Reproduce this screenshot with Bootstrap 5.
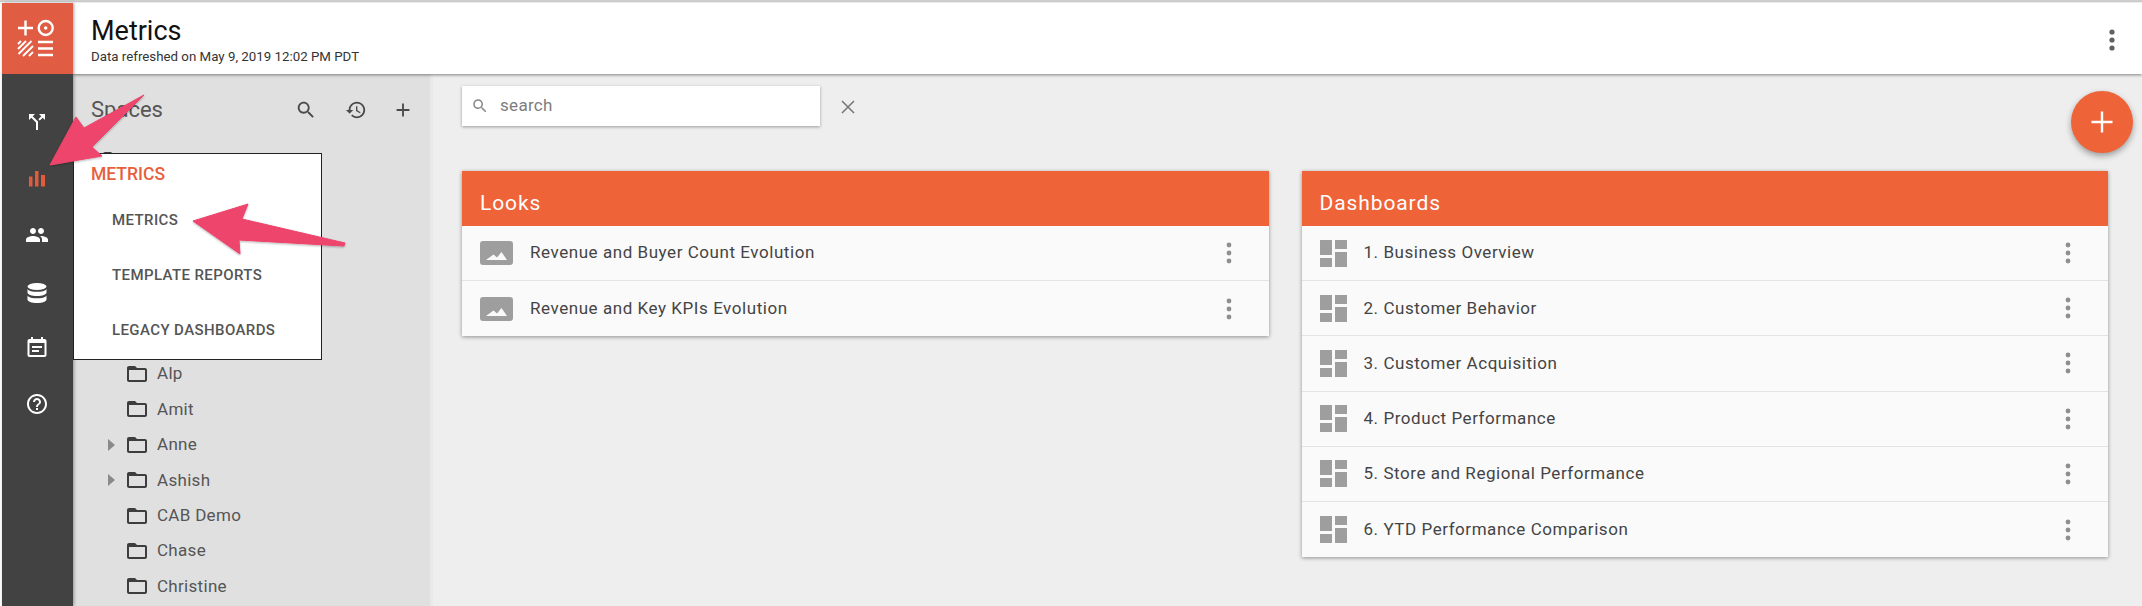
<!DOCTYPE html>
<html lang="en">
<head>
<meta charset="utf-8">
<title>Metrics</title>
<link href="https://cdn.jsdelivr.net/npm/bootstrap@5.3.0/dist/css/bootstrap.min.css" rel="stylesheet">
<style>
html,body{height:606px;overflow:hidden}
body{font-family:Roboto,"Liberation Sans",sans-serif;background:#fff;position:relative;color:#424242;padding:3px 0 0 2px;box-shadow:inset 0 2px 0 #cfcfcf}
.app-shell{height:603px}
.rail{width:71px;background:#424242;box-shadow:1px 0 3px rgba(0,0,0,.35);z-index:3}
.logo-box{height:71px;background:#e05c42}
.logo-box svg{width:71px;height:71px;display:block}
.rail-list{padding-top:20px}
.rail-item{height:56.4px;display:flex;align-items:center;justify-content:center;fill:#fff;padding-right:1px}
.rail-item svg{width:24px;height:24px}
.rail-item.now{fill:#e05c3d}
.rail-item.low svg{margin-top:3px}
.rail-item.high svg{margin-bottom:2px}
.top-head{height:71px;background:#fff;padding:2px 27px 0 18px;box-shadow:0 1px 3px rgba(0,0,0,.45);z-index:2}
.page-name{font-size:27px;line-height:32px;color:#111;margin:0;font-weight:400}
.page-sub{font-size:13.3px;line-height:15px;color:#333;margin-top:2px}
.side{width:357px;background:#e0e0e0;overflow:hidden;flex:none}
.side-head{height:53px;margin-top:9px;padding:0 16px 0 18px}
.side-name{font-size:22px;color:#555}
.side-tools svg{width:22px;height:22px;fill:#4a4a4a;display:block}
.side-tools{gap:25px}
.side-tools svg:first-child{margin-right:3px}
.tree{padding-top:8px}
.tree-row{height:35.4px;display:flex;align-items:center;font-size:17px;letter-spacing:.3px;color:#555;padding-left:35px}
.tree-row .caret-box{width:17px;flex:none;padding-left:0}
.tree-row .caret-box i{display:block;width:0;height:0;border-left:7px solid #8a8a8a;border-top:6px solid transparent;border-bottom:6px solid transparent}
.tree-row svg{width:24px;height:24px;fill:#3d3d3d;flex:none;margin-right:8px}
.gutter{width:3px;background:#e9e9e9;flex:none}
.stage{background:#eee;padding:12px 34px 0 29px;overflow:hidden}
.search-box{width:358px;height:40px;background:#fff;box-shadow:0 1px 3px rgba(0,0,0,.35);padding-left:9px;font-size:17px;color:#7d7d7d;letter-spacing:.3px}
.search-box svg{width:18px;height:18px;fill:#8a8a8a;margin-right:11px}
.clear-x{margin-left:20px;width:16px;height:16px;stroke:#757575;stroke-width:1.5;margin-top:2px}
.panels{margin-top:45px;gap:33px}
.panel{flex:1 1 0;border:0;border-radius:0;box-shadow:0 1px 4px rgba(0,0,0,.4);background:#fafafa}
.panel-top{height:55px;background:#ee6338;color:#fff;font-size:21px;padding:10px 0 0 18px;letter-spacing:.9px}
.panel-row{height:55.2px;display:flex;align-items:center;background:#fafafa;border:0;border-bottom:1px solid #e3e3e3;padding:0 37px 0 18px;font-size:17px;color:#444;border-radius:0;letter-spacing:.55px}
.panel-row:last-child{border-bottom:0}
.kind-icon{width:33px;height:24px;flex:none;margin-right:17px;fill:#9e9e9e}
.kind-dash{width:27px;height:27px;flex:none;margin-right:17px;fill:#9e9e9e}
.dots{width:6px;height:22px;flex:none;fill:#8f8f8f;margin-left:auto}
.head-dots{width:6px;height:22px;fill:#616161}
.fab{position:absolute;left:2071px;top:91px;width:62px;height:62px;border-radius:50%;background:#ee6338;box-shadow:0 3px 6px rgba(0,0,0,.35);display:flex;align-items:center;justify-content:center;z-index:4}
.fab svg{width:36px;height:36px;fill:#fff}
.fly-menu{position:absolute;left:73px;top:153px;width:249px;height:207px;background:#fff;border:1px solid #222;z-index:5;padding-left:17px}
.fly-title{font-size:17.5px;font-weight:500;color:#e85f3e;line-height:20px;margin-top:10px}
.fly-item{font-size:15px;font-weight:500;color:#555;line-height:20px;margin-left:21px;margin-top:35px;letter-spacing:.4px}
.fly-item.first{margin-top:26px}
.arrows{position:absolute;left:0;top:0;width:400px;height:300px;z-index:6;pointer-events:none;overflow:visible}
</style>
</head>
<body>
<div class="app-shell d-flex">
  <nav class="rail d-flex flex-column flex-shrink-0">
    <div class="logo-box">
      <svg viewBox="0 0 71 71" fill="none" stroke="#fff" stroke-width="2.4">
        <path d="M16 25h15M23.500 17.500v15"/>
        <circle cx="43.700" cy="25" r="7"/><circle cx="43.700" cy="25" r="1.800" fill="#fff" stroke="none"/>
        <path d="M16 41l3-3M16 46l8-8M16.500 51l13-13M21 53l10-10M27 53l4-4" stroke-width="1.900"/>
        <path d="M36 39h15M36 45.500h15M36 52h15"/>
      </svg>
    </div>
    <div class="rail-list">
      <div class="rail-item"><svg viewBox="0 0 24 24"><path d="M14 4l2.290 2.290-2.880 2.880 1.420 1.420 2.880-2.880L20 10V4zm-4 0H4v6l2.290-2.290 4.710 4.700V20h2v-8.410l-5.290-5.300z"/></svg></div>
      <div class="rail-item now"><svg viewBox="0 0 24 24"><path d="M4 9.500h3.500v10H4zM10 4h3.500v15.500H10zM16 8h4v11.500h-4z"/></svg></div>
      <div class="rail-item"><svg viewBox="0 0 24 24"><path d="M16 11c1.660 0 2.990-1.340 2.990-3S17.660 5 16 5c-1.660 0-3 1.340-3 3s1.340 3 3 3zm-8 0c1.660 0 2.990-1.340 2.990-3S9.660 5 8 5C6.340 5 5 6.340 5 8s1.340 3 3 3zm0 2c-2.330 0-7 1.170-7 3.500V19h14v-2.500c0-2.330-4.670-3.500-7-3.500zm8 0c-.290 0-.620.020-.970.050 1.160.840 1.970 1.970 1.970 3.450V19h6v-2.500c0-2.330-4.670-3.500-7-3.500z"/></svg></div>
      <div class="rail-item low"><svg viewBox="0 0 24 24"><ellipse cx="12" cy="5.500" rx="9.500" ry="3.500"/><path d="M2.500 8v3.500c0 1.900 4 3.500 9.500 3.500s9.500-1.600 9.500-3.500V8c-1 2-5 2.800-9.500 2.800S3.500 10 2.500 8zM2.500 14.500v4c0 1.900 4 3.500 9.500 3.500s9.500-1.600 9.500-3.500v-4c-1 2-5 2.800-9.500 2.800s-8.500-.8-9.500-2.800z"/></svg></div>
      <div class="rail-item high"><svg viewBox="0 0 24 24"><path d="M19.500 4H18V2h-2v2H8V2H6v2H4.500c-1.100 0-2 .9-2 2v14c0 1.100.9 2 2 2h15c1.100 0 2-.9 2-2V6c0-1.100-.9-2-2-2zm0 16h-15V8h15v12zM7 11h10v2H7zM7 15h7v2H7z"/></svg></div>
      <div class="rail-item"><svg viewBox="0 0 24 24"><path d="M11 18h2v-2h-2v2zm1-16C6.480 2 2 6.480 2 12s4.480 10 10 10 10-4.480 10-10S17.520 2 12 2zm0 18c-4.410 0-8-3.590-8-8s3.590-8 8-8 8 3.590 8 8-3.590 8-8 8zm0-14c-2.210 0-4 1.790-4 4h2c0-1.100.9-2 2-2s2 .9 2 2c0 2-3 1.750-3 5h2c0-2.250 3-2.500 3-5 0-2.210-1.790-4-4-4z"/></svg></div>
    </div>
  </nav>
  <div class="d-flex flex-column flex-grow-1">
    <header class="top-head d-flex align-items-center justify-content-between">
      <div>
        <h1 class="page-name">Metrics</h1>
        <div class="page-sub">Data refreshed on May 9, 2019 12:02 PM PDT</div>
      </div>
      <svg class="head-dots" viewBox="0 0 6 22"><circle cx="3" cy="3" r="2.600"/><circle cx="3" cy="11" r="2.600"/><circle cx="3" cy="19" r="2.600"/></svg>
    </header>
    <div class="d-flex flex-grow-1" style="min-height:0">
      <aside class="side">
        <div class="side-head d-flex align-items-center justify-content-between">
          <span class="side-name">Spaces</span>
          <div class="side-tools d-flex align-items-center">
            <svg viewBox="0 0 24 24"><path d="M15.500 14h-.790l-.280-.270C15.410 12.590 16 11.110 16 9.500 16 5.910 13.090 3 9.500 3S3 5.910 3 9.500 5.910 16 9.500 16c1.610 0 3.090-.590 4.230-1.570l.270.280v.790l5 4.990L20.490 19l-4.990-5zm-6 0C7.010 14 5 11.990 5 9.500S7.010 5 9.500 5 14 7.010 14 9.500 11.990 14 9.500 14z"/></svg>
            <svg viewBox="0 0 24 24"><path d="M13 3c-4.970 0-9 4.030-9 9H1l3.890 3.890.070.140L9 12H6c0-3.870 3.130-7 7-7s7 3.130 7 7-3.130 7-7 7c-1.930 0-3.680-.790-4.940-2.060l-1.420 1.420C8.270 19.990 10.510 21 13 21c4.970 0 9-4.030 9-9s-4.030-9-9-9zm-1 5v5l4.280 2.540.720-1.210-3.500-2.080V8H12z"/></svg>
            <svg viewBox="0 0 24 24"><path d="M19 13h-6v6h-2v-6H5v-2h6V5h2v6h6v2z"/></svg>
          </div>
        </div>
        <div class="tree">
          <div class="tree-row" style="height:212.400px;align-items:flex-start"><svg viewBox="0 0 24 24" style="margin-top:4px;margin-left:-7px"><path d="M20 6h-8l-2-2H4c-1.100 0-1.990.9-1.990 2L2 18c0 1.100.9 2 2 2h16c1.100 0 2-.9 2-2V8c0-1.100-.9-2-2-2zm0 12H4V8h16v10z"/></svg></div>
          <div class="tree-row"><span class="caret-box"></span><svg viewBox="0 0 24 24"><path d="M20 6h-8l-2-2H4c-1.100 0-1.990.9-1.990 2L2 18c0 1.100.9 2 2 2h16c1.100 0 2-.9 2-2V8c0-1.100-.9-2-2-2zm0 12H4V8h16v10z"/></svg>Alp</div>
          <div class="tree-row"><span class="caret-box"></span><svg viewBox="0 0 24 24"><path d="M20 6h-8l-2-2H4c-1.100 0-1.990.9-1.990 2L2 18c0 1.100.9 2 2 2h16c1.100 0 2-.9 2-2V8c0-1.100-.9-2-2-2zm0 12H4V8h16v10z"/></svg>Amit</div>
          <div class="tree-row"><span class="caret-box"><i></i></span><svg viewBox="0 0 24 24"><path d="M20 6h-8l-2-2H4c-1.100 0-1.990.9-1.990 2L2 18c0 1.100.9 2 2 2h16c1.100 0 2-.9 2-2V8c0-1.100-.9-2-2-2zm0 12H4V8h16v10z"/></svg>Anne</div>
          <div class="tree-row"><span class="caret-box"><i></i></span><svg viewBox="0 0 24 24"><path d="M20 6h-8l-2-2H4c-1.100 0-1.990.9-1.990 2L2 18c0 1.100.9 2 2 2h16c1.100 0 2-.9 2-2V8c0-1.100-.9-2-2-2zm0 12H4V8h16v10z"/></svg>Ashish</div>
          <div class="tree-row"><span class="caret-box"></span><svg viewBox="0 0 24 24"><path d="M20 6h-8l-2-2H4c-1.100 0-1.990.9-1.990 2L2 18c0 1.100.9 2 2 2h16c1.100 0 2-.9 2-2V8c0-1.100-.9-2-2-2zm0 12H4V8h16v10z"/></svg>CAB Demo</div>
          <div class="tree-row"><span class="caret-box"></span><svg viewBox="0 0 24 24"><path d="M20 6h-8l-2-2H4c-1.100 0-1.990.9-1.990 2L2 18c0 1.100.9 2 2 2h16c1.100 0 2-.9 2-2V8c0-1.100-.9-2-2-2zm0 12H4V8h16v10z"/></svg>Chase</div>
          <div class="tree-row"><span class="caret-box"></span><svg viewBox="0 0 24 24"><path d="M20 6h-8l-2-2H4c-1.100 0-1.990.9-1.990 2L2 18c0 1.100.9 2 2 2h16c1.100 0 2-.9 2-2V8c0-1.100-.9-2-2-2zm0 12H4V8h16v10z"/></svg>Christine</div>
        </div>
      </aside>
      <div class="gutter"></div>
      <main class="stage flex-grow-1">
        <div class="d-flex align-items-center">
          <div class="search-box d-flex align-items-center">
            <svg viewBox="0 0 24 24"><path d="M15.500 14h-.790l-.280-.270C15.410 12.590 16 11.110 16 9.500 16 5.910 13.090 3 9.500 3S3 5.910 3 9.500 5.910 16 9.500 16c1.610 0 3.090-.590 4.230-1.570l.270.280v.790l5 4.990L20.490 19l-4.990-5zm-6 0C7.010 14 5 11.990 5 9.500S7.010 5 9.500 5 14 7.010 14 9.500 11.990 14 9.500 14z"/></svg>search
          </div>
          <svg class="clear-x" viewBox="0 0 16 16"><path d="M2 2l12 12M14 2L2 14"/></svg>
        </div>
        <div class="panels d-flex align-items-start">
          <section class="card panel">
            <div class="panel-top d-flex align-items-center">Looks</div>
            <div class="list-group list-group-flush">
              <div class="list-group-item panel-row"><svg class="kind-icon" viewBox="0 0 33 24"><path fill-rule="evenodd" d="M3 0h27a3 3 0 0 1 3 3v18a3 3 0 0 1-3 3H3a3 3 0 0 1-3-3V3a3 3 0 0 1 3-3zM6 19h21l-5.500-8-4.500 5.500-3.500-3z"/></svg>Revenue and Buyer Count Evolution<svg class="dots" viewBox="0 0 6 22"><circle cx="3" cy="3" r="2.400"/><circle cx="3" cy="11" r="2.400"/><circle cx="3" cy="19" r="2.400"/></svg></div>
              <div class="list-group-item panel-row"><svg class="kind-icon" viewBox="0 0 33 24"><path fill-rule="evenodd" d="M3 0h27a3 3 0 0 1 3 3v18a3 3 0 0 1-3 3H3a3 3 0 0 1-3-3V3a3 3 0 0 1 3-3zM6 19h21l-5.500-8-4.500 5.500-3.500-3z"/></svg>Revenue and Key KPIs Evolution<svg class="dots" viewBox="0 0 6 22"><circle cx="3" cy="3" r="2.400"/><circle cx="3" cy="11" r="2.400"/><circle cx="3" cy="19" r="2.400"/></svg></div>
            </div>
          </section>
          <section class="card panel">
            <div class="panel-top d-flex align-items-center">Dashboards</div>
            <div class="list-group list-group-flush">
              <div class="list-group-item panel-row"><svg class="kind-dash" viewBox="3 3 18 18"><path d="M3 13h8V3H3v10zm0 8h8v-6H3v6zm10 0h8V11h-8v10zm0-18v6h8V3h-8z"/></svg>1. Business Overview<svg class="dots" viewBox="0 0 6 22"><circle cx="3" cy="3" r="2.400"/><circle cx="3" cy="11" r="2.400"/><circle cx="3" cy="19" r="2.400"/></svg></div>
              <div class="list-group-item panel-row"><svg class="kind-dash" viewBox="3 3 18 18"><path d="M3 13h8V3H3v10zm0 8h8v-6H3v6zm10 0h8V11h-8v10zm0-18v6h8V3h-8z"/></svg>2. Customer Behavior<svg class="dots" viewBox="0 0 6 22"><circle cx="3" cy="3" r="2.400"/><circle cx="3" cy="11" r="2.400"/><circle cx="3" cy="19" r="2.400"/></svg></div>
              <div class="list-group-item panel-row"><svg class="kind-dash" viewBox="3 3 18 18"><path d="M3 13h8V3H3v10zm0 8h8v-6H3v6zm10 0h8V11h-8v10zm0-18v6h8V3h-8z"/></svg>3. Customer Acquisition<svg class="dots" viewBox="0 0 6 22"><circle cx="3" cy="3" r="2.400"/><circle cx="3" cy="11" r="2.400"/><circle cx="3" cy="19" r="2.400"/></svg></div>
              <div class="list-group-item panel-row"><svg class="kind-dash" viewBox="3 3 18 18"><path d="M3 13h8V3H3v10zm0 8h8v-6H3v6zm10 0h8V11h-8v10zm0-18v6h8V3h-8z"/></svg>4. Product Performance<svg class="dots" viewBox="0 0 6 22"><circle cx="3" cy="3" r="2.400"/><circle cx="3" cy="11" r="2.400"/><circle cx="3" cy="19" r="2.400"/></svg></div>
              <div class="list-group-item panel-row"><svg class="kind-dash" viewBox="3 3 18 18"><path d="M3 13h8V3H3v10zm0 8h8v-6H3v6zm10 0h8V11h-8v10zm0-18v6h8V3h-8z"/></svg>5. Store and Regional Performance<svg class="dots" viewBox="0 0 6 22"><circle cx="3" cy="3" r="2.400"/><circle cx="3" cy="11" r="2.400"/><circle cx="3" cy="19" r="2.400"/></svg></div>
              <div class="list-group-item panel-row"><svg class="kind-dash" viewBox="3 3 18 18"><path d="M3 13h8V3H3v10zm0 8h8v-6H3v6zm10 0h8V11h-8v10zm0-18v6h8V3h-8z"/></svg>6. YTD Performance Comparison<svg class="dots" viewBox="0 0 6 22"><circle cx="3" cy="3" r="2.400"/><circle cx="3" cy="11" r="2.400"/><circle cx="3" cy="19" r="2.400"/></svg></div>
            </div>
          </section>
        </div>
      </main>
    </div>
  </div>
</div>
<div class="fab"><svg viewBox="0 0 24 24"><path d="M19 12.800h-6.200V19h-1.600v-6.200H5v-1.600h6.200V5h1.600v6.200H19z"/></svg></div>
<div class="fly-menu">
  <div class="fly-title">METRICS</div>
  <div class="fly-item first">METRICS</div>
  <div class="fly-item">TEMPLATE REPORTS</div>
  <div class="fly-item">LEGACY DASHBOARDS</div>
</div>
<svg class="arrows" viewBox="0 0 400 300">
  <defs><filter id="arrowshade" x="-20%" y="-20%" width="140%" height="140%"><feDropShadow dx="0" dy="1" stdDeviation="1" flood-color="#000" flood-opacity=".3"/></filter></defs>
  <g fill="#ee446c" filter="url(#arrowshade)" stroke="#ee446c" stroke-width="1" stroke-linejoin="round">
    <path d="M144 95L92 147l10 9-52 9 26-48 8 11z"/>
    <path d="M193 221l55-17-6 15 103 24-1 3-105-6 1 14z"/>
  </g>
</svg>
<script src="https://cdn.jsdelivr.net/npm/bootstrap@5.3.0/dist/js/bootstrap.bundle.min.js"></script>
</body>
</html>
